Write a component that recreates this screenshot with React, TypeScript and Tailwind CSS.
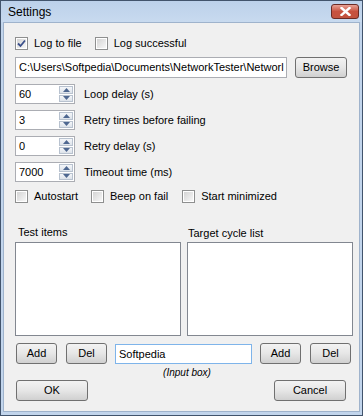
import React from 'react';

const font = { fontFamily: '"Liberation Sans", Arial, sans-serif' };

const CheckBox = ({ checked, label }: { checked?: boolean; label: string }) => (
  <label className="flex items-center h-[13px]">
    <span className="w-[13px] h-[13px] border border-[#8e8f8f] bg-white flex items-center justify-center shrink-0">
      <span className="w-[9px] h-[9px] bg-gradient-to-br from-[#d4d4d4] to-[#f7f7f7] flex items-center justify-center">
        {checked && (
          <svg width="9" height="9" viewBox="0 0 9 9">
            <path d="M1 4.5 L3.5 7 L8 1.5" fill="none" stroke="#3a4f8a" strokeWidth="1.8" />
          </svg>
        )}
      </span>
    </span>
    <span className="ml-[6px] text-[11px] leading-[13px] text-black whitespace-nowrap">{label}</span>
  </label>
);

const Button = ({ label, className }: { label: string; className: string }) => (
  <button
    className={`h-[21px] rounded-[3px] border border-[#707070] bg-gradient-to-b from-[#f3f3f3] via-[#e6e6e6] to-[#d0d0d0] text-[11px] text-black flex items-center justify-center shrink-0 ${className}`}
  >
    {label}
  </button>
);

const Spinner = ({ value, label }: { value: string; label: string }) => (
  <div className="flex items-center mt-[6px]">
    <div className="w-[60px] h-[20px] border border-[#abadb3] bg-white flex items-stretch">
      <span className="flex-1 pl-[3px] text-[11px] leading-[18px] text-black">{value}</span>
      <div className="w-[15px] flex flex-col gap-[1px] p-[1px] pl-0">
        <div className="flex-1 border border-[#b8c2cf] bg-gradient-to-b from-[#f4f6f9] to-[#dde3ea] flex items-center justify-center">
          <svg width="7" height="4" viewBox="0 0 7 4"><path d="M0 4 L3.5 0 L7 4 Z" fill="#4e6790" /></svg>
        </div>
        <div className="flex-1 border border-[#b8c2cf] bg-gradient-to-b from-[#f4f6f9] to-[#dde3ea] flex items-center justify-center">
          <svg width="7" height="4" viewBox="0 0 7 4"><path d="M0 0 L3.5 4 L7 0 Z" fill="#4e6790" /></svg>
        </div>
      </div>
    </div>
    <span className="ml-[9px] text-[11px] text-black">{label}</span>
  </div>
);

export default function App() {
  return (
    <div style={font} className="w-[363px] h-[416px] bg-[#c2d5ec] border border-[#42546c] flex flex-col select-none">
      <div className="h-[21px] flex items-center justify-between pl-[7px] pr-[3px] bg-gradient-to-b from-[#bcd1ea] to-[#c8daef]">
        <span className="text-[12px] text-black">Settings</span>
        <div className="w-[28px] h-[15px] rounded-[3px] border border-[#6b2b25] bg-gradient-to-b from-[#e8a195] via-[#c7513f] to-[#c2533f] flex items-center justify-center">
          <svg width="11" height="9" viewBox="0 0 11 9">
            <path d="M1.5 1 L9.5 8 M9.5 1 L1.5 8" stroke="#ffffff" strokeWidth="2.4" strokeLinecap="square" />
          </svg>
        </div>
      </div>
      <div className="mx-[2px] mb-[3px] flex-1 bg-[#f0f0f0] border border-[#9fb3cc] pl-[11px] pt-[14px] flex flex-col">
        <div className="flex items-center">
          <CheckBox checked label="Log to file" />
          <div className="ml-[13px]">
            <CheckBox label="Log successful" />
          </div>
        </div>

        <div className="flex items-center mt-[7px]">
          <div className="w-[272px] h-[21px] border border-[#abadb3] bg-white pl-[3px] text-[11px] leading-[19px] text-black overflow-hidden whitespace-nowrap">
            {'C:\\Users\\Softpedia\\Documents\\NetworkTester\\Networl'}
          </div>
          <Button label="Browse" className="w-[52px] ml-[8px]" />
        </div>

        <Spinner value="60" label="Loop delay (s)" />
        <Spinner value="3" label="Retry times before failing" />
        <Spinner value="0" label="Retry delay (s)" />
        <Spinner value="7000" label="Timeout time (ms)" />

        <div className="flex items-center mt-[8px]">
          <CheckBox label="Autostart" />
          <div className="ml-[13px]">
            <CheckBox label="Beep on fail" />
          </div>
          <div className="ml-[14px]">
            <CheckBox label="Start minimized" />
          </div>
        </div>

        <div className="flex mt-[22px] gap-[6px]">
          <div className="flex flex-col w-[166px]">
            <span className="pl-[3px] text-[11px] leading-[14px] text-black">Test items</span>
            <div className="mt-[3px] h-[94px] border border-[#828790] bg-white" />
          </div>
          <div className="flex flex-col w-[166px]">
            <span className="pl-[1px] pt-[1px] text-[11px] leading-[14px] text-black">Target cycle list</span>
            <div className="mt-[2px] h-[94px] border border-[#828790] bg-white" />
          </div>
        </div>

        <div className="flex items-center mt-[7px] pl-[1px]">
          <Button label="Add" className="w-[41px]" />
          <Button label="Del" className="w-[41px] ml-[9px]" />
          <div className="w-[137px] h-[20px] ml-[8px] border border-[#7eb4ea] bg-white pl-[3px] text-[11px] leading-[18px] text-black">
            Softpedia
          </div>
          <Button label="Add" className="w-[41px] ml-[8px]" />
          <Button label="Del" className="w-[41px] ml-[9px]" />
        </div>

        <div className="text-center w-[344px] text-[10px] italic leading-[12px] mt-[3px] text-black">(Input box)</div>

        <div className="flex items-center mt-[1px] pl-[1px]">
          <Button label="OK" className="w-[72px]" />
          <Button label="Cancel" className="w-[72px] ml-[186px]" />
        </div>
      </div>
    </div>
  );
}
